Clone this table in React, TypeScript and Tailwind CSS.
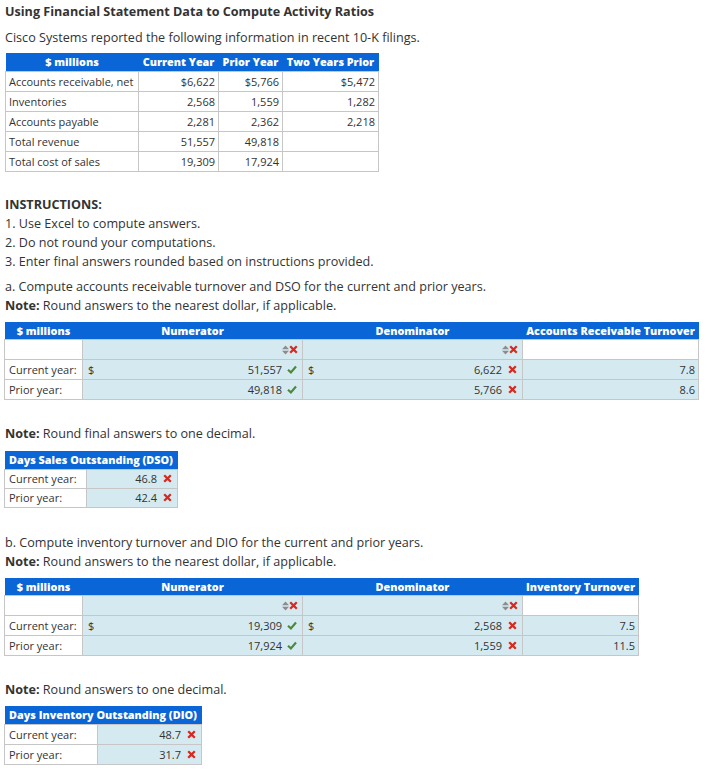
const cellBorder = 'border border-[#c6c6c6]';

function CheckIcon() {
  return (
    <svg width="10" height="9" viewBox="0 0 10 9" className="block">
      <path d="M1 4.8 L3.9 7.4 L9 1.6" fill="none" stroke="#4a8b3b" strokeWidth="2.2" />
    </svg>
  );
}

function XIcon() {
  return (
    <svg width="9" height="9" viewBox="0 0 9 9" className="block">
      <path d="M1.2 1.2 L7.8 7.8 M7.8 1.2 L1.2 7.8" fill="none" stroke="#d42a20" strokeWidth="2.3" />
    </svg>
  );
}

function SortIcon() {
  return (
    <svg width="7" height="10" viewBox="0 0 7 10" className="block">
      <polygon points="0,4.2 3.5,0.5 7,4.2" fill="#8c8c8c" />
      <polygon points="0,5.8 3.5,9.5 7,5.8" fill="#8c8c8c" />
    </svg>
  );
}

type Mark = 'check' | 'x' | 'none';

function Mk({ m }: { m: Mark }) {
  if (m === 'check') return <CheckIcon />;
  if (m === 'x') return <XIcon />;
  return null;
}

function InputCell({ dollar, value, mark, h = 'h-[20px]' }: { dollar?: boolean; value: string; mark: Mark; h?: string }) {
  return (
    <td className={`${cellBorder} bg-[#d5eaf0] ${h} p-0`}>
      <div className="flex items-center pl-[5px] pr-[5px]">
        {dollar && <span>$</span>}
        <span className="flex-1 text-right">{value}</span>
        <span className="ml-[5px] flex w-[10px] justify-center">
          <Mk m={mark} />
        </span>
      </div>
    </td>
  );
}

function SortCell() {
  return (
    <td className={`${cellBorder} bg-[#d5eaf0] h-[20px] p-0`}>
      <div className="flex items-center justify-end pr-[4px]">
        <SortIcon />
        <XIcon />
      </div>
    </td>
  );
}

type Row = { label: string; num: string; numMark: Mark; den: string; denMark: Mark; result: string };

const headCell = 'h-[18px] px-0 pt-[2px] pb-0 text-[10.8px] font-extrabold';

function RatioTable({
  resultLabel,
  widths,
  rows,
}: {
  resultLabel: string;
  widths: [string, string, string, string];
  rows: Row[];
}) {
  return (
    <table className="table-fixed border-collapse text-[11px] leading-none text-[#333]">
      <thead>
        <tr className="bg-[#0a66d6] text-white">
          <th className={`${widths[0]} ${headCell}`}>$ millions</th>
          <th className={`${widths[1]} ${headCell}`}>Numerator</th>
          <th className={`${widths[2]} ${headCell}`}>Denominator</th>
          <th className={`${widths[3]} ${headCell} whitespace-nowrap`}>{resultLabel}</th>
        </tr>
      </thead>
      <tbody>
        <tr>
          <td className={`${cellBorder} bg-white h-[20px]`} />
          <SortCell />
          <SortCell />
          <td className={`${cellBorder} bg-white h-[20px]`} />
        </tr>
        {rows.map((r, i) => (
          <tr key={r.label}>
            <td className={`${cellBorder} bg-white h-[20px] px-[4px]`}>{r.label}</td>
            <InputCell dollar={i === 0} value={r.num} mark={r.numMark} />
            <InputCell dollar={i === 0} value={r.den} mark={r.denMark} />
            <td className={`${cellBorder} bg-[#d5eaf0] h-[20px] pr-[3px] text-right`}>{r.result}</td>
          </tr>
        ))}
      </tbody>
    </table>
  );
}

function DaysTable({
  title,
  tableW,
  labelW,
  rowH,
  rows,
}: {
  title: string;
  tableW: string;
  labelW: string;
  rowH: string;
  rows: { label: string; value: string }[];
}) {
  return (
    <table className={`${tableW} table-fixed border-collapse text-[11px] leading-none text-[#333]`}>
      <colgroup>
        <col className={labelW} />
        <col />
      </colgroup>
      <thead>
        <tr className="bg-[#0a66d6] text-white">
          <th colSpan={2} className={`${headCell} whitespace-nowrap`}>{title}</th>
        </tr>
      </thead>
      <tbody>
        {rows.map((r) => (
          <tr key={r.label}>
            <td className={`${cellBorder} bg-white ${rowH} px-[4px]`}>{r.label}</td>
            <InputCell value={r.value} mark="x" h={rowH} />
          </tr>
        ))}
      </tbody>
    </table>
  );
}

const filings = [
  ['Accounts receivable, net', '$6,622', '$5,766', '$5,472'],
  ['Inventories', '2,568', '1,559', '1,282'],
  ['Accounts payable', '2,281', '2,362', '2,218'],
  ['Total revenue', '51,557', '49,818', ''],
  ['Total cost of sales', '19,309', '17,924', ''],
];

export default function App() {
  return (
    <div className="min-h-[775px] bg-white pl-[4px] pt-[2px] font-['Open_Sans',sans-serif] text-[12.6px] leading-[19px] text-[#333]">
      <h1 className="ml-[1px] font-bold">Using Financial Statement Data to Compute Activity Ratios</h1>
      <p className="ml-[1px] mt-[7px]">Cisco Systems reported the following information in recent 10-K filings.</p>

      {/* source data */}
      <table className="ml-[1px] mt-[6px] table-fixed border-collapse text-[11px] leading-none">
        <thead>
          <tr className="bg-[#0a66d6] text-white">
            <th className={`w-[133px] ${headCell}`}>$ millions</th>
            <th className={`w-[80px] ${headCell}`}>Current Year</th>
            <th className={`w-[64px] ${headCell}`}>Prior Year</th>
            <th className={`w-[96px] ${headCell}`}>Two Years Prior</th>
          </tr>
        </thead>
        <tbody>
          {filings.map((row) => (
            <tr key={row[0]}>
              <td className={`${cellBorder} h-[20px] px-[3px]`}>{row[0]}</td>
              <td className={`${cellBorder} h-[20px] px-[3px] text-right`}>{row[1]}</td>
              <td className={`${cellBorder} h-[20px] px-[3px] text-right`}>{row[2]}</td>
              <td className={`${cellBorder} h-[20px] px-[3px] text-right`}>{row[3]}</td>
            </tr>
          ))}
        </tbody>
      </table>

      <div className="ml-[1px] mt-[23px]">
        <p className="font-bold">INSTRUCTIONS:</p>
        <p>1. Use Excel to compute answers.</p>
        <p>2. Do not round your computations.</p>
        <p>3. Enter final answers rounded based on instructions provided.</p>
      </div>

      {/* part a */}
      <div className="ml-[1px] mt-[6px]">
        <p>a. Compute accounts receivable turnover and DSO for the current and prior years.</p>
        <p>
          <b>Note:</b> Round answers to the nearest dollar, if applicable.
        </p>
      </div>
      <div className="mt-[7px]">
        <RatioTable
          resultLabel="Accounts Receivable Turnover"
          widths={['w-[78px]', 'w-[220px]', 'w-[220px]', 'w-[176px]']}
          rows={[
            { label: 'Current year:', num: '51,557', numMark: 'check', den: '6,622', denMark: 'x', result: '7.8' },
            { label: 'Prior year:', num: '49,818', numMark: 'check', den: '5,766', denMark: 'x', result: '8.6' },
          ]}
        />
      </div>
      <p className="ml-[1px] mt-[24px]">
        <b>Note:</b> Round final answers to one decimal.
      </p>
      <div className="mt-[8px]">
        <DaysTable
          title="Days Sales Outstanding (DSO)"
          tableW="w-[174px]"
          labelW="w-[82px]"
          rowH="h-[19px]"
          rows={[
            { label: 'Current year:', value: '46.8' },
            { label: 'Prior year:', value: '42.4' },
          ]}
        />
      </div>

      {/* part b */}
      <div className="ml-[1px] mt-[25px]">
        <p>b. Compute inventory turnover and DIO for the current and prior years.</p>
        <p>
          <b>Note:</b> Round answers to the nearest dollar, if applicable.
        </p>
      </div>
      <div className="mt-[7px]">
        <RatioTable
          resultLabel="Inventory Turnover"
          widths={['w-[78px]', 'w-[220px]', 'w-[220px]', 'w-[116px]']}
          rows={[
            { label: 'Current year:', num: '19,309', numMark: 'check', den: '2,568', denMark: 'x', result: '7.5' },
            { label: 'Prior year:', num: '17,924', numMark: 'check', den: '1,559', denMark: 'x', result: '11.5' },
          ]}
        />
      </div>
      <p className="ml-[1px] mt-[24px]">
        <b>Note:</b> Round answers to one decimal.
      </p>
      <div className="mt-[7px]">
        <DaysTable
          title="Days Inventory Outstanding (DIO)"
          tableW="w-[198px]"
          labelW="w-[93px]"
          rowH="h-[20px]"
          rows={[
            { label: 'Current year:', value: '48.7' },
            { label: 'Prior year:', value: '31.7' },
          ]}
        />
      </div>
    </div>
  );
}
